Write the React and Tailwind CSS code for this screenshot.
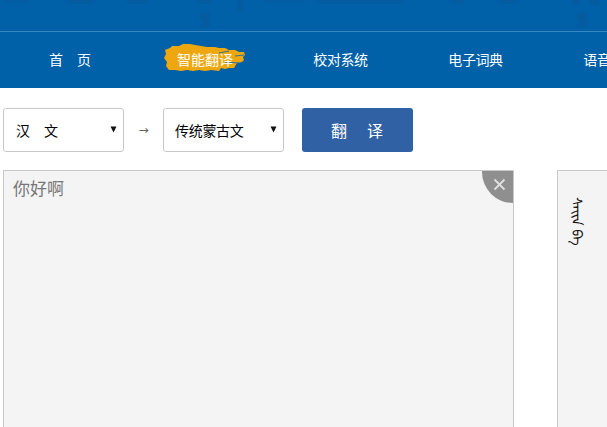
import React from "react";

const font = { fontFamily: '"Noto Sans CJK SC", "Liberation Sans", sans-serif' };

function Marks() {
  return (
    <svg className="absolute left-0 top-0" width="607" height="31" viewBox="0 0 607 31">
      <defs>
        <filter id="soft" x="-10%" y="-50%" width="120%" height="200%">
          <feGaussianBlur stdDeviation="0.9" />
        </filter>
      </defs>
      <g fill="#0a5490" opacity="0.45" filter="url(#soft)">
        <rect x="3" y="0" width="26" height="2" />
        <rect x="66" y="0" width="28" height="3" />
        <rect x="127" y="0" width="20" height="3" />
        <rect x="198" y="0" width="14" height="3" />
        <rect x="238" y="0" width="5" height="11" />
        <rect x="265" y="0" width="40" height="2" />
        <rect x="318" y="0" width="84" height="3" />
        <rect x="450" y="0" width="14" height="3" />
        <rect x="498" y="0" width="20" height="3" />
        <rect x="572" y="0" width="8" height="4" />
        <rect x="590" y="0" width="8" height="5" />
        <path d="M201 13 L208 13 L210 18 L206 20 L210 24 L208 27 L201 27 L204 22 L200 18 Z" />
        <path d="M578 13 L585 13 L587 18 L583 20 L587 24 L586 27 L577 27 L580 22 L577 18 Z" />
      </g>
    </svg>
  );
}

function Brush() {
  return (
    <svg className="absolute left-[-14px] top-[-7px]" width="84" height="32" viewBox="0 0 84 32">
      <path
        d="M2 8 L7 6 L9 4 L16 4 L20 2 L27 2 L32 3 L38 4 L44 5 L52 5 L56 6 L62 6 L66 8 L72 8 L76 10 L81 10 L82 13 L80 15 L81 18 L79 20 L74 21 L71 26 L66 26 L62 27 L58 26 L56 29 L48 28 L42 29 L36 28 L30 29 L24 28 L18 29 L12 28 L6 28 L3 24 L4 20 L1 16 L3 12 Z"
        fill="#eea70e"
      />
      <path d="M56 11 L66 9 M62 20 L76 21 M72 14 L81 13" stroke="#2f71a0" strokeWidth="1" fill="none" />
    </svg>
  );
}

function Select({ label, second }) {
  return (
    <div className={`relative h-[44px] w-[121px] rounded-[3px] border border-[#c9c9c9] bg-white flex items-center text-[14px] text-black ${second ? "pl-[11px] tracking-[-0.3px]" : "pl-[12px]"}`}>
      <span className="whitespace-pre">{label}</span>
      <svg className="absolute right-[6px] top-[17px]" width="7" height="7" viewBox="0 0 7 7">
        <path d="M0.5 0.5 H6.5 L3.5 6.5 Z" fill="#111" />
      </svg>
    </div>
  );
}

export default function App() {
  const nav = ["首　页", "智能翻译", "校对系统", "电子词典", "语音识别"];
  return (
    <div style={font} className="relative w-[607px] h-[427px] overflow-hidden bg-white">
      <div className="relative h-[32px] bg-[#0060a8] border-b border-[#3a86c2]">
        <Marks />
      </div>
      <nav className="h-[56px] bg-[#0060a8] flex pl-[3px] text-[14px] tracking-[-0.4px] text-white">
        {nav.map((n, i) => (
          <div key={n} className="w-[135px] shrink-0 flex items-center justify-center pb-[1px]">
            <span className={`relative whitespace-nowrap ${i === 0 ? "tracking-normal mr-[1px]" : ""} ${i === 1 ? "tracking-normal mr-[1px]" : ""}`}>
              {i === 1 && <Brush />}
              <span className="relative">{n}</span>
            </span>
          </div>
        ))}
      </nav>
      <div className="flex items-center pl-[3px] pt-[20px]">
        <Select label="汉　文" />
        <span className="w-[39px] text-center text-[12px] text-[#666]" style={{ fontFamily: '"DejaVu Sans", sans-serif' }}>→</span>
        <Select label="传统蒙古文" second />
        <button className="ml-[18px] w-[111px] h-[44px] rounded-[3px] bg-[#3061a4] text-white text-[16px] flex items-center justify-center gap-[20px] pr-[1px]">
          <span>翻</span>
          <span>译</span>
        </button>
      </div>
      <div className="flex pl-[3px] pt-[18px]">
        <div className="relative w-[511px] h-[300px] shrink-0 overflow-hidden border border-[#c9c9c9] bg-[#f4f4f4] px-[9px] py-[5px] text-[17px] leading-[24px] text-[#777]">
          你好啊
          <div className="absolute right-0 top-0 w-[31px] h-[32px] bg-[#8f8f8f] rounded-bl-[31px] flex items-start justify-end pr-[7px] pt-[7px]">
            <svg width="13" height="13" viewBox="0 0 13 13">
              <path d="M1.5 1.5 L11.5 11.5 M11.5 1.5 L1.5 11.5" stroke="#e0e0e0" strokeWidth="1.8" />
            </svg>
          </div>
        </div>
        <div className="ml-[43px] w-[200px] h-[300px] shrink-0 border border-[#c9c9c9] bg-[#f4f4f4] pl-[11px] pt-[26px]">
          <span className="text-[14px] font-medium text-[#111]" style={{ writingMode: "vertical-lr", fontFamily: '"Noto Sans Mongolian", "Noto Sans", sans-serif' }}>ᠰᠠᠢᠨ ᠪᠠ</span>
        </div>
      </div>
    </div>
  );
}
